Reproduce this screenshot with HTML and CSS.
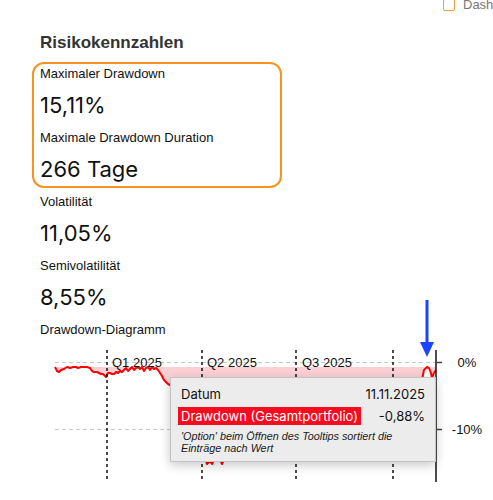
FILE: index.html
```html
<!DOCTYPE html>
<html lang="de">
<head>
  <meta charset="UTF-8" />
  <meta name="viewport" content="width=device-width, initial-scale=1.0"/>
  <title>Risikokennzahlen</title>
  <link rel="stylesheet" href="styles.css">
</head>
<body>
  <div class="page">
    <div class="topbar">
      <span class="check"></span>
      <span class="topbar-label">Dash</span>
    </div>

    <h2 class="section-title">Risikokennzahlen</h2>

    <div class="highlight">
      <div class="metric">
        <div class="metric-label">Maximaler Drawdown</div>
        <div class="metric-value">15,11%</div>
      </div>
      <div class="metric">
        <div class="metric-label">Maximale Drawdown Duration</div>
        <div class="metric-value">266 Tage</div>
      </div>
    </div>

    <div class="metric">
      <div class="metric-label">Volatilität</div>
      <div class="metric-value">11,05%</div>
    </div>
    <div class="metric">
      <div class="metric-label">Semivolatilität</div>
      <div class="metric-value">8,55%</div>
    </div>

    <div class="metric-label">Drawdown-Diagramm</div>
    <div class="chart">
      <svg class="chart-svg" width="453" height="150" viewBox="0 0 453 150">
        <!-- grid -->
        <g stroke="#c8c8c8" stroke-width="1" stroke-dasharray="4 3">
          <line x1="15" y1="22.5" x2="396" y2="22.5"/>
          <line x1="15" y1="89.5" x2="396" y2="89.5"/>
        </g>

        <!-- drawdown area + line -->
        <path fill="#fbd0d4" d="M15 27 L396 27 L396 30 L394 33 L392 38 L391 33 L389 28 L387 27 L384 30 L382 40 L370 45 L350 52 L330 60 L310 70 L290 78 L270 84 L250 90 L230 96 L215 104 L200 110 L190 112 L186 116 L182 124 L178 115 L175 118 L172 124 L170 121 L167 124 L165 118 L160 105 L155 95 L150 85 L145 72 L140 60 L135 52 L130 45 L128 44 L126 42 L124 40 L122 36 L120 33 L118 30 L116 28 L114 29 L112 27 L110 30 L108 27 L106 28 L104 31 L102 27 L100 29 L98 27 L96 28 L94 30 L92 27 L90 29 L88 31 L86 28 L84 30 L82 32 L80 31 L78 33 L76 32 L74 34 L72 34 L70 33 L68 33 L66 37 L65 36 L63 34 L61 34 L59 33 L57 32 L54 32 L52 31 L50 28 L47 27 L44 27 L41 27 L38 28 L36 27 L33 27 L30 28 L27 27 L24 29 L21 30 L19 32 L17 31 Z"/>
        <polyline fill="none" stroke="#f00" stroke-width="2" stroke-linejoin="round"
          points="15,27 17,31 19,32 21,30 24,29 27,27 30,28 33,27 36,27 38,28 41,27 44,27 47,27 50,28 52,31 54,32 57,32 59,33 61,34 63,34 65,36 66,37 68,33 70,33 72,34 74,34 76,32 78,33 80,31 82,32 84,30 86,28 88,31 90,29 92,27 94,30 96,28 98,27 100,29 102,27 104,31 106,28 108,27 110,30 112,27 114,29 116,28 118,30 120,33 122,36 124,40 126,42 128,44 130,45 135,52 140,60 145,72 150,85 155,95 160,105 165,118 167,124 170,121 172,124 175,118 178,115 182,124 186,116 190,112 200,110 215,104 230,96 250,90 270,84 290,78 310,70 330,60 350,52 370,45 382,40 384,30 387,27 389,28 391,33 392,38 394,33 396,30"/>

        <!-- quarter markers -->
        <g stroke="#111" stroke-width="1.5" stroke-dasharray="3 3">
          <line x1="67" y1="10" x2="67" y2="142"/>
          <line x1="162" y1="10" x2="162" y2="142"/>
          <line x1="256" y1="10" x2="256" y2="142"/>
          <line x1="353" y1="10" x2="353" y2="142"/>
        </g>
        <g class="axis-text">
          <text x="72" y="27">Q1 2025</text>
          <text x="167" y="27">Q2 2025</text>
          <text x="262" y="27">Q3 2025</text>
        </g>

        <!-- right axis -->
        <line x1="396" y1="10" x2="396" y2="142" stroke="#111" stroke-width="1.5"/>
        <g stroke="#444" stroke-width="1.5">
          <line x1="397" y1="22.5" x2="402" y2="22.5"/>
          <line x1="397" y1="89.5" x2="402" y2="89.5"/>
        </g>
        <g class="axis-text" text-anchor="middle">
          <text x="427" y="27">0%</text>
          <text x="427" y="94">-10%</text>
        </g>
      </svg>

      <svg class="marker" width="14" height="58" viewBox="0 0 14 58">
        <line x1="7" y1="0" x2="7" y2="45" stroke="#1a44ff" stroke-width="3"/>
        <polygon points="0,42 14,42 7,57" fill="#1a44ff"/>
      </svg>

      <div class="tooltip">
        <div class="tooltip-row">
          <span>Datum</span>
          <span>11.11.2025</span>
        </div>
        <div class="tooltip-row">
          <span class="series">Drawdown (Gesamtportfolio)</span>
          <span>-0,88%</span>
        </div>
        <div class="tooltip-note">'Option' beim Öffnen des Tooltips sortiert die Einträge nach Wert</div>
      </div>
    </div>
  </div>
</body>
</html>
```

FILE: styles.css
```css
* {
  box-sizing: border-box;
}

body {
  margin: 0;
  background: #fff;
  color: #111;
  font-family: 'Liberation Sans', Arial, sans-serif;
  overflow: hidden;
}

.page {
  padding-left: 40px;
}

.topbar {
  display: flex;
  align-items: center;
  gap: 8px;
  margin-top: -2px;
  padding-left: 403px;
  height: 14px;
  white-space: nowrap;
}

.check {
  flex: none;
  width: 12px;
  height: 12px;
  border: 1.5px solid #f39a3a;
  border-radius: 2px;
}

.topbar-label {
  font-size: 13px;
  line-height: 14px;
  color: #777;
}

.section-title {
  margin: 21px 0 9px;
  font-size: 17px;
  line-height: 20px;
  font-weight: bold;
  color: #333;
}

.highlight {
  width: 250px;
  margin: 0 0 6px -8px;
  padding: 2px 6px;
  border: 2px solid #f7931e;
  border-radius: 12px;
}

.metric-label {
  font-size: 13px;
  line-height: 16px;
}

.metric-value {
  margin: 8px 0 10px;
  font-family: 'Inter', sans-serif;
  font-size: 22px;
  line-height: 30px;
}

.highlight .metric:last-child .metric-value {
  margin-bottom: 0;
}

/* chart */

.chart {
  position: relative;
  margin-top: 2px;
  width: 453px;
  height: 150px;
}

.chart-svg {
  display: block;
}

.axis-text {
  font-family: 'Liberation Sans', Arial, sans-serif;
  font-size: 13px;
  fill: #111;
}

.marker {
  position: absolute;
  left: 380px;
  top: -40px;
}

.tooltip {
  position: absolute;
  left: 130px;
  top: 37px;
  width: 266px;
  padding: 7px 10px 7px;
  background: #ececec;
  border: 1px solid #c4c4c4;
  box-shadow: 0 3px 10px rgba(0, 0, 0, 0.22);
  font-family: 'Inter', sans-serif;
  font-size: 13px;
  line-height: 18px;
}

.tooltip-row {
  display: flex;
  justify-content: space-between;
}

.tooltip-row + .tooltip-row {
  margin-top: 4px;
}

.series {
  margin-left: -3px;
  padding: 0 3px;
  background: #fa0a1e;
  color: #fff;
}

.tooltip-note {
  margin-top: 6px;
  font-family: 'Liberation Sans', Arial, sans-serif;
  font-size: 10.8px;
  line-height: 11.5px;
  font-style: italic;
  color: #1a1a1a;
}
```
